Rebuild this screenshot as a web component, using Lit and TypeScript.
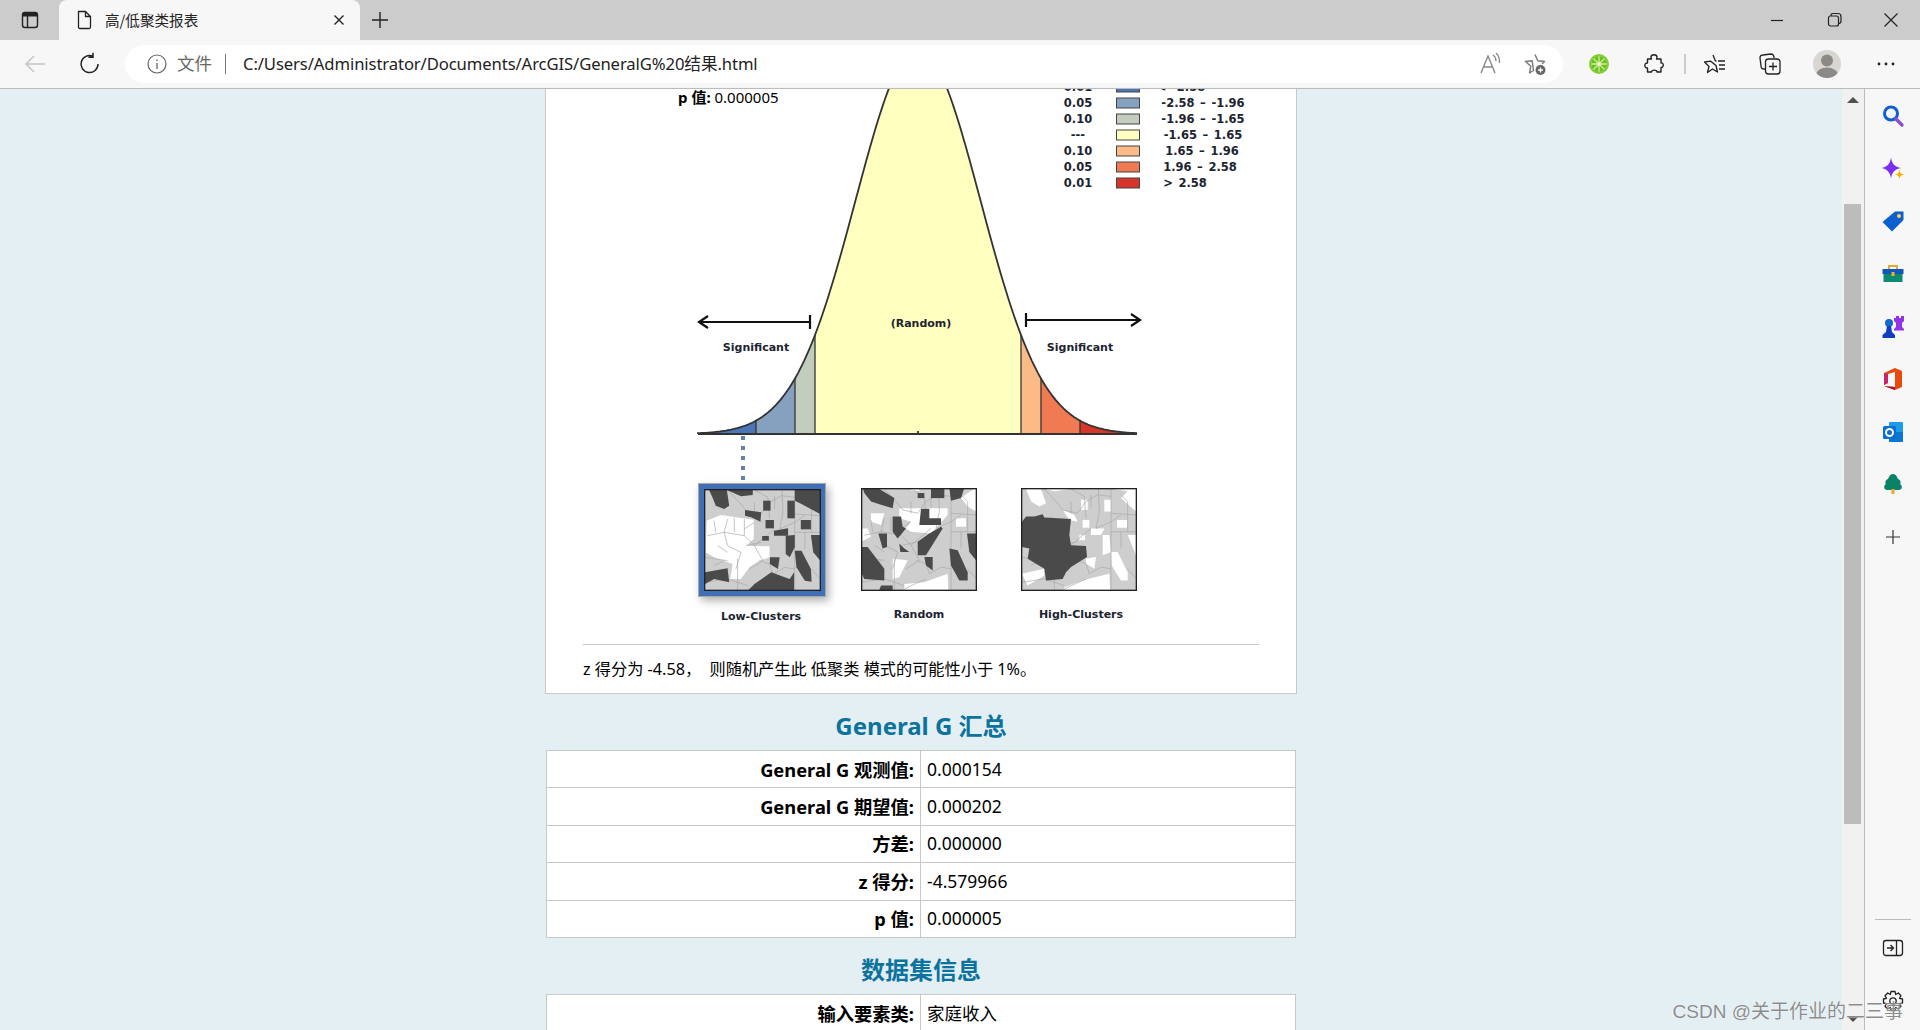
import { LitElement, html, css, svg } from "lit";
import { customElement } from "lit/decorators.js";

const bellH = (x: number) => 385 * Math.exp(-((x - 918) ** 2) / 7812);
const bellPts = (a: number, b: number) => {
  const p: string[] = [];
  for (let x = a; x <= b; x += 2) p.push(`${x},${(434 - bellH(x)).toFixed(1)}`);
  p.push(`${b},${(434 - bellH(b)).toFixed(1)}`);
  return p;
};
const band = (a: number, b: number) => `M${a},434 L${bellPts(a, b).join(" L")} L${b},434 Z`;
const curve = `M698,434 L${bellPts(698, 1137).join(" L")}`;

const bands: [number, number, string][] = [
  [698, 756, "#4a76b8"],
  [756, 795, "#86a0c0"],
  [795, 815, "#c3cdbd"],
  [815, 1021, "#ffffbf"],
  [1021, 1041, "#fcba86"],
  [1041, 1080, "#f07a52"],
  [1080, 1137, "#d7352a"],
];
const legend: [number, string, string, number, string][] = [
  [87, "0.01", "< -2.58", 1181, "#4a76b8"],
  [103, "0.05", "-2.58 – -1.96", 1203, "#86a0c0"],
  [119, "0.10", "-1.96 – -1.65", 1203, "#c3cdbd"],
  [135, "---", "-1.65 – 1.65", 1203, "#ffffbf"],
  [151, "0.10", "1.65 – 1.96", 1202, "#fcba86"],
  [167, "0.05", "1.96 – 2.58", 1200, "#f07a52"],
  [183, "0.01", "> 2.58", 1185, "#d7352a"],
];

const streets = svg`<path class="st" d="M70,3 L110,45 L125,65 L170,75 L195,40 L230,20 L270,25 M150,3 L190,25 L195,90 M232,3 L235,70 L225,120 M270,3 L270,303 M270,75 L345,80 M270,130 L345,130 M210,120 L150,170 L120,140 L60,130 L10,140 M70,90 L60,130 L70,170 L110,190 L95,240 M120,90 L120,140 M150,170 L175,215 L135,240 M0,205 L70,215 M100,210 L100,303 M3,280 L70,270 L130,290 M165,215 L195,225 L205,255 L240,235 L270,240 M300,20 L320,40 L320,130 M320,240 L345,270 M225,120 L270,100 L300,80 M30,95 L35,130 M90,85 L90,130 M150,100 L120,120 M40,170 L70,190 M170,160 L125,170 M300,130 L300,180 M210,20 L210,60 M150,40 L150,75 M195,270 L130,300 M30,230 L60,215"/>`;

const low = {
  white: ["8,95 50,78 148,92 148,150 125,170 195,172 195,205 165,215 135,235 110,270 78,270 85,225 30,205 5,190"],
  dark: ["15,3 68,3 75,50 60,60 35,50 25,25", "68,3 145,3 145,18 110,22", "176,35 198,35 198,65 176,65", "248,35 270,35 270,88 248,88", "270,3 345,3 345,75 290,45 270,35", "122,63 170,70 168,98 140,85 122,80", "183,93 208,93 208,118 183,118", "288,93 318,93 318,121 288,121", "208,125 250,118 250,140 208,140", "173,141 193,141 193,155 173,155", "243,140 270,138 270,175 255,205 243,195", "318,138 346,138 346,215 325,190", "270,185 290,185 318,240 320,278 300,275 275,235", "196,205 225,205 220,240 196,225", "133,303 150,285 200,250 240,265 255,270 268,250 268,303", "3,250 70,238 75,280 30,270 3,285"],
};
const random = {
  white: ["345,0 345,70 320,55 300,30 320,15", "115,60 260,60 260,80 210,135 150,130 135,120 150,100 115,90", "30,75 70,75 60,110 30,100", "0,120 20,120 30,145 0,160", "285,90 315,90 315,115 285,115", "95,210 140,215 115,265 95,270", "130,285 190,280 260,255 262,303 130,303", "150,0 175,0 175,8 150,8"],
  dark: ["5,0 50,0 100,30 95,60 60,50 30,40 10,15", "170,15 190,15 190,30 170,30", "210,0 250,0 250,30 210,30", "265,0 310,0 300,30 270,38", "95,85 120,85 125,115 135,120 110,150 95,130", "180,62 205,62 205,90 240,90 240,110 175,110", "52,135 78,135 78,175 65,180", "205,135 240,115 245,120 195,200 170,200 170,160", "318,135 345,135 345,215 325,190", "265,180 290,185 320,250 320,275 295,275 270,230", "0,175 20,175 70,240 70,275 10,270 0,250", "115,165 130,180 145,190 118,190", "190,205 215,205 215,245 195,230", "60,290 95,290 95,303 55,303"],
};
const high = {
  white: ["15,3 60,3 75,45 55,55 30,40", "70,3 150,3 100,10", "180,35 200,35 200,65 180,65", "250,35 270,35 270,70 250,70", "275,3 345,3 345,70 300,30 320,10", "125,65 160,80 170,100 145,95", "185,95 205,95 205,118 185,118", "288,95 318,95 318,118 288,118", "210,120 250,120 240,140 210,140", "175,140 192,140 192,155 175,155", "245,140 265,140 270,190 245,200", "320,140 345,140 345,200", "270,190 290,190 320,250 320,275 300,275 272,230", "195,210 225,205 220,240 195,225", "3,255 70,240 70,260 20,290", "130,295 170,280 200,270 265,255 268,303 130,303"],
  dark: ["15,85 40,85 65,78 70,88 150,92 145,140 150,170 195,172 198,205 150,235 135,250 125,270 75,275 70,240 20,210 25,180 3,175 3,100"],
};

const map = (x: number, y: number, w: number, h: number, d: { white: string[]; dark: string[] }) => svg`
  <svg x=${x} y=${y} width=${w} height=${h} viewBox="0 0 348 306" preserveAspectRatio="none">
    <g class="soft">
      <rect class="mapbg" width="348" height="306"/>
      ${d.white.map((p) => svg`<polygon class="mw" points=${p}/>`)}
      ${streets}
      ${d.dark.map((p) => svg`<polygon class="md" points=${p}/>`)}
    </g>
    <rect class="mapframe" x="2" y="2" width="344" height="302"/>
  </svg>`;

const diagram = svg`
  <svg class="diagram" viewBox="546 89 750 552" width="750" height="552">
    <text class="pval" x="678" y="103"><tspan class="b">p 值:</tspan> 0.000005</text>
    ${bands.map(([a, b, c]) => svg`<path d=${band(a, b)} fill=${c}/>`)}
    ${[756, 795, 815, 1021, 1041, 1080].map((x) => svg`<line class="div" x1=${x} x2=${x} y1="434" y2=${434 - bellH(x)}/>`)}
    <path class="bell" d=${curve}/>
    <line class="bell" x1="698" x2="1137" y1="434" y2="434"/>
    <line class="bell" x1="918" x2="918" y1="431" y2="434"/>
    <path class="arrow" d="M699,322 H810 M810,315 V329 M708,316 L699,322 L708,328"/>
    <path class="arrow" d="M1026,320 H1140 M1026,313 V327 M1131,314 L1140,320 L1131,326"/>
    <text class="lab" x="756" y="351" text-anchor="middle">Significant</text>
    <text class="lab" x="1080" y="351" text-anchor="middle">Significant</text>
    <text class="lab" x="921" y="327" text-anchor="middle">(Random)</text>
    <line class="dots" x1="743" x2="743" y1="436" y2="482"/>
    ${legend.map(([y, a, b, cx, c]) => svg`
      <text class="lab leg" x="1078" y=${y + 4} text-anchor="middle">${a}</text>
      <rect class="sw" x="1116.5" y=${y - 5} width="23" height="10" fill=${c}/>
      <text class="lab leg rng" x=${cx} y=${y + 4} text-anchor="middle">${b}</text>`)}
    <rect class="frame" x="698.5" y="483.5" width="127" height="113"/>
    ${map(704, 489, 117, 102, low)}
    ${map(861, 488, 116, 103, random)}
    ${map(1021, 488, 116, 103, high)}
    <text class="lab" x="761" y="620" text-anchor="middle">Low-Clusters</text>
    <text class="lab" x="919" y="618" text-anchor="middle">Random</text>
    <text class="lab" x="1081" y="618" text-anchor="middle">High-Clusters</text>
  </svg>`;

const i = (body: unknown, size = 24) => html`<svg class="ic" width=${size} height=${size} viewBox="0 0 24 24">${body}</svg>`;
const sideIcons = [
  svg`<circle cx="10" cy="9.5" r="6.5" fill="none" stroke="#0f5fd0" stroke-width="3"/><path d="M15,15 L21,21" stroke="#8a4fd8" stroke-width="3.4" stroke-linecap="round"/>`,
  svg`<path d="M10,0.5 C11,7 13.5,9.5 20,11 C13.5,12.5 11,15 10,21.5 C9,15 6.5,12.5 0.5,11 C6.5,9.5 9,7 10,0.5Z" fill="#7a2ff0"/><path d="M18.5,12.5 C19,16 20,17 23.5,17.5 C20,18 19,19 18.5,22.5 C18,19 17,18 13.5,17.5 C17,17 18,16 18.5,12.5Z" fill="#f4b400"/>`,
  svg`<path d="M14,2.5 H22.5 V11 L11,22.5 L1.5,13Z" fill="#0c5fd0"/><circle cx="18" cy="7" r="2" fill="#ffd24a"/>`,
  svg`<path d="M8,7 V4 H16 V7" fill="none" stroke="#e8a838" stroke-width="2"/><rect x="1.5" y="7" width="21" height="5" fill="#1258b8"/><rect x="2.5" y="12" width="19" height="8" fill="#0e8a72"/><rect x="10.5" y="10" width="3" height="4" fill="#f2b02e"/>`,
  svg`<path d="M13,1 V3 H15 V1 H18 V3 H20 V1 H23 V6 L21,8 V12 L23,14 V15.5 H13 V14 L15,12 V8 L13,6Z" fill="#9333e8"/><circle cx="8" cy="8" r="4" fill="#1668d0"/><path d="M6,11 H10 L11,17 L14,20 V23 H1.5 V20 L5,17Z" fill="#0f3fc0"/>`,
  svg`<path d="M3,6 L14,1 L21,4 V20 L14,23 L3,19 L14,20 V5 L7,7 V16 L3,18Z" fill="#e84a0c"/><path d="M3,6 L7,7 V16 L3,18Z" fill="#c8246a"/><path d="M3,19 L14,20 V23Z" fill="#b01030"/>`,
  svg`<rect x="8" y="2" width="14" height="20" rx="1" fill="#1c9be8"/><rect x="8" y="12" width="14" height="10" fill="#0a78d0"/><rect x="2" y="6" width="13" height="13" rx="1.5" fill="#0a6fd0"/><circle cx="8.5" cy="12.5" r="3.5" fill="none" stroke="#fff" stroke-width="2"/>`,
  svg`<path d="M12,2 C15,2 16,5 17,7 C20,8 20,11 19,12 C22,14 21,18 18,18 H6 C3,18 2,14 5,12 C4,11 4,8 7,7 C8,5 9,2 12,2Z" fill="#0b8268"/><rect x="10.5" y="17" width="3" height="5" fill="#f0a828"/>`,
  svg`<path d="M12,5 V19 M5,12 H19" stroke="#333" stroke-width="1.2"/>`,
];

@customElement("app-root")
export class AppRoot extends LitElement {
  static styles = css`
    :host { display: flex; flex-direction: column; width: 1920px; height: 1030px; overflow: hidden; position: relative; font-family: "Noto Sans", "Noto Sans CJK SC", sans-serif; color: #000; }
    .ic { display: block; flex: none; }
    .tabs { height: 40px; background: #ccc; display: flex; align-items: flex-end; flex: none; }
    .tb-toggle { width: 59px; height: 40px; display: flex; align-items: center; justify-content: center; }
    .tab { width: 301px; height: 40px; background: #f7f7f7; border-radius: 8px 8px 0 0; display: flex; align-items: center; box-sizing: border-box; padding: 0 9px 0 13px; }
    .tab-title { flex: 1; margin-left: 9px; padding-bottom: 2px; font: 14.6px "Noto Sans CJK SC", sans-serif; color: #222; }
    .newtab { width: 40px; height: 40px; display: flex; align-items: center; justify-content: center; }
    .spacer { flex: 1; }
    .wins { display: flex; align-items: center; height: 40px; padding-right: 17px; gap: 33px; }
    .toolbar { height: 48px; background: #f7f7f7; border-bottom: 1px solid #bbb; display: flex; align-items: center; flex: none; position: relative; }
    .nav { display: flex; width: 125px; flex: none; padding-left: 23px; gap: 31px; box-sizing: border-box; }
    .pill { width: 1438px; height: 38px; background: #fff; border-radius: 19px; display: flex; align-items: center; box-sizing: border-box; padding: 0 16px 0 20px; flex: none; }
    .file { margin-left: 8px; padding-bottom: 3px; font: 17.5px "Noto Sans CJK SC", sans-serif; color: #666; }
    .sep { width: 1px; height: 20px; background: #777; margin: 0 17px 0 13px; }
    .url { flex: 1; padding-bottom: 2px; font: 16.65px "Noto Sans", "Noto Sans CJK SC", sans-serif; color: #222; white-space: nowrap; letter-spacing: -0.1px; }
    .pill-r { display: flex; gap: 20px; }
    .tools { display: flex; align-items: center; flex: 1; padding-left: 24px; }
    .tools .gap45 { margin-left: 31px; }
    .vsep { width: 2px; height: 20px; background: #ccc; margin-left: 18px; margin-right: 17px; }
    .avatar { width: 28px; height: 28px; margin-left: 31px; }
    .more { margin-left: 33px; }
    .main { flex: 1; display: flex; min-height: 0; }
    .page { flex: 1; background: #e4eff4; display: flex; flex-direction: column; align-items: center; overflow: hidden; position: relative; }
    .wrap { width: 752px; display: flex; flex-direction: column; align-items: center; }
    .card { width: 752px; box-sizing: border-box; background: #fff; border: 1px solid #c8c8c8; border-top: none; height: 605px; }
    .diagram { display: block; }
    .pval { font: 15px "Noto Sans", "Noto Sans CJK SC", sans-serif; fill: #000; }
    .b { font-weight: 700; }
    .bell { fill: none; stroke: #333; stroke-width: 1.8; }
    .div { stroke: #333; stroke-width: 1.3; }
    .arrow { fill: none; stroke: #111; stroke-width: 2.2; }
    .lab { font: 700 11px "DejaVu Sans", sans-serif; fill: #1c2430; }
    .leg { font-size: 11.5px; }
    .rng { word-spacing: 1.6px; }
    .dots { stroke: #6480ae; stroke-width: 4; stroke-dasharray: 4 6; }
    .sw { stroke: #444; stroke-width: 1; }
    .frame { fill: #3f6fb5; stroke: #a8a8a8; stroke-width: 1; filter: drop-shadow(3px 4px 4px rgba(0, 0, 0, 0.3)); }
    .soft { filter: blur(0.35px); }
    .mapbg { fill: #cecece; }
    .mw { fill: #fff; }
    .md { fill: #4a4a4a; }
    .st { fill: none; stroke: #a8a8a8; stroke-width: 2; }
    .mapframe { fill: none; stroke: #222; stroke-width: 4; }
    .rule { height: 1px; background: #c8c8c8; margin: 3px 37px 0; }
    .note { margin: 0 37px; height: 49px; line-height: 49px; font-size: 16.2px; white-space: pre; }
    h2 { margin: 0; height: 56px; line-height: 64px; font-size: 24px; font-weight: 700; color: #0b739e; text-align: center; width: 100%; }
    table { width: 750px; border-collapse: collapse; background: #fff; table-layout: fixed; flex: none; }
    td { height: 37.4px; padding: 0 6px 1px; box-sizing: border-box; border: 1px solid #c8c8c8; font-size: 17.5px; white-space: nowrap; }
    td.k { width: 374px; text-align: right; font-weight: 700; font-size: 18.3px; }
    .scroll { width: 22px; flex: none; background: #f1f1f1; position: relative; }
    .thumb { position: absolute; left: 2px; width: 17px; top: 115px; height: 620px; background: #bcbcbc; }
    .up, .down { position: absolute; left: 5px; width: 0; height: 0; border-left: 6px solid transparent; border-right: 6px solid transparent; }
    .up { top: 8px; border-bottom: 6px solid #505050; }
    .down { bottom: 8px; border-top: 6px solid #505050; }
    .side { width: 56px; flex: none; background: #f7f7f7; border-left: 1px solid #bbb; display: flex; flex-direction: column; align-items: center; padding-top: 1px; box-sizing: border-box; }
    .si { height: 52.6px; display: flex; align-items: center; justify-content: center; flex: none; }
    .si:last-of-type { margin-top: 3px; }
    .side .low { margin-top: auto; display: flex; flex-direction: column; align-items: center; }
    .hrule { width: 36px; height: 1px; background: #bbb; margin-bottom: 16px; }
    .low .ic + .ic { margin-top: 29px; }
    .low { padding-bottom: 17px; }
    .mark { position: absolute; right: 17px; bottom: 7px; font: 19px "Liberation Sans", "Noto Sans CJK SC", sans-serif; color: rgba(120, 120, 120, 0.85); text-shadow: 0 0 1px #fff; white-space: nowrap; }
  `;

  row(k: string, v: string) {
    return html`<tr><td class="k">${k}</td><td>${v}</td></tr>`;
  }

  render() {
    return html`
      <div class="tabs">
        <div class="tb-toggle">${i(svg`<rect x="4.5" y="4.5" width="15" height="15" rx="2.5" fill="none" stroke="#222" stroke-width="1.4"/><path d="M4.5,7 Q4.5,4.5 7,4.5 H17 Q19.5,4.5 19.5,7 V8.5 H4.5Z" fill="#222"/><path d="M9.5,8 V19.5" stroke="#222" stroke-width="1.4"/>`)}</div>
        <div class="tab">
          ${i(svg`<path d="M6.5,3.5 H13.5 L18.5,8.5 V19 Q18.5,20.5 17,20.5 H8 Q6.5,20.5 6.5,19Z M13.5,3.5 V8.5 H18.5" fill="none" stroke="#222" stroke-width="1.3"/>`)}
          <span class="tab-title">高/低聚类报表</span>
          ${i(svg`<path d="M7.5,7.5 L16.5,16.5 M16.5,7.5 L7.5,16.5" stroke="#222" stroke-width="1.4"/>`)}
        </div>
        <div class="newtab">${i(svg`<path d="M12,4 V20 M4,12 H20" stroke="#222" stroke-width="1.4"/>`)}</div>
        <div class="spacer"></div>
        <div class="wins">
          ${i(svg`<path d="M6,12.5 H18" stroke="#222" stroke-width="1.2"/>`)}
          ${i(svg`<rect x="6.5" y="8" width="10" height="10" rx="2" fill="none" stroke="#222" stroke-width="1.2"/><path d="M9,8 V7.5 Q9,5.5 11,5.5 H16 Q19,5.5 19,8.5 V13 Q19,15.5 16.5,15.5" fill="none" stroke="#222" stroke-width="1.2"/>`)}
          ${i(svg`<path d="M5.5,5.5 L18.5,18.5 M18.5,5.5 L5.5,18.5" stroke="#222" stroke-width="1.2"/>`)}
        </div>
      </div>
      <div class="toolbar">
        <div class="nav">
          ${i(svg`<path d="M22,12 H3 M11,4 L3,12 L11,20" fill="none" stroke="#c4c4c4" stroke-width="1.5"/>`)}
          ${i(svg`<path d="M20,12 A8.5,8.5 0 1 1 15,4.3 M15,0.8 V5.3 H10.5" fill="none" stroke="#222" stroke-width="1.5"/>`)}
        </div>
        <div class="pill">
          ${i(svg`<circle cx="12" cy="12" r="9" fill="none" stroke="#666" stroke-width="1.2"/><path d="M12,11 V17 M12,7.5 V9" stroke="#666" stroke-width="1.3"/>`)}
          <span class="file">文件</span><span class="sep"></span>
          <span class="url">C:/Users/Administrator/Documents/ArcGIS/GeneralG%20结果.html</span>
          <div class="pill-r">
            ${i(svg`<path d="M2,21 L9,4 L16,21 M5,15 H13" fill="none" stroke="#888" stroke-width="1.4"/><path d="M14,3 Q17,5 17,9 M17,1 Q21,5 20.5,11" fill="none" stroke="#888" stroke-width="1.3"/>`)}
            ${i(svg`<path d="M12,2.5 L14.8,8.8 L21.5,9.5 L19,12 M10.5,18.5 L6.5,21 L7.8,14.3 L2.5,9.5 L9.2,8.8Z" fill="none" stroke="#777" stroke-width="1.4" stroke-linejoin="round"/><circle cx="17.5" cy="18" r="5" fill="#666"/><path d="M17.5,15.5 V20.5 M15,18 H20" stroke="#fff" stroke-width="1.3"/>`)}
          </div>
        </div>
        <div class="tools">
          ${i(svg`<circle cx="12" cy="12" r="10" fill="#84cf38"/><circle cx="12" cy="12" r="7.5" fill="#6fbb22"/><path d="M12,4.5 V19.5 M4.5,12 H19.5 M6.7,6.7 L17.3,17.3 M17.3,6.7 L6.7,17.3" stroke="#d4f0a8" stroke-width="1.3"/><circle cx="12" cy="12" r="1.8" fill="#e4f6c4"/>`)}
          <span class="gap45">${i(svg`<path d="M9,5 C9,2 15,2 15,5 C15,6 15,6.5 14.5,7 H19 V11 C22,10 22,16 19,15.5 V20 H15 C15,17.5 9.5,17.5 9.5,20 H5.5 V16 C2,16.5 2,10.5 5.5,11 V7 H9.5 C9,6.5 9,6 9,5Z" fill="none" stroke="#222" stroke-width="1.4" stroke-linejoin="round"/>`)}</span>
          <span class="vsep"></span>
          ${i(svg`<path d="M10,3 L12.3,8.8 L13.5,9 M13,13.5 L14.5,20 L9.5,17 L4.5,20.5 L6,14.5 L1.5,10 L7.7,9.2Z" fill="none" stroke="#222" stroke-width="1.3" stroke-linejoin="round"/><path d="M15,9 H22 M16,13 H22 M16,17 H22" stroke="#222" stroke-width="1.3"/>`)}
          <span class="gap45">${i(svg`<path d="M7,17 H6 Q3,17 3,14 L2,6 Q2,3 5,3 L13,2 Q15.5,2 16,5 V6" fill="none" stroke="#222" stroke-width="1.3"/><rect x="7.5" y="7" width="14.5" height="15" rx="3" fill="none" stroke="#222" stroke-width="1.3"/><path d="M15,10.5 V18.5 M11,14.5 H19" stroke="#222" stroke-width="1.3"/>`)}</span>
          <span class="avatar"><svg class="ic" width="28" height="28" viewBox="0 0 28 28"><defs><clipPath id="av"><circle cx="14" cy="14" r="14"/></clipPath></defs><circle cx="14" cy="14" r="14" fill="#d8d6d3"/><g clip-path="url(#av)"><circle cx="14" cy="10.5" r="6" fill="#8d8986"/><ellipse cx="14" cy="24" rx="10.5" ry="6.5" fill="#8d8986"/></g></svg></span>
          <span class="more">${i(svg`<circle cx="5" cy="12" r="1.4" fill="#222"/><circle cx="12" cy="12" r="1.4" fill="#222"/><circle cx="19" cy="12" r="1.4" fill="#222"/>`)}</span>
        </div>
      </div>
      <div class="main">
        <div class="page">
          <div class="wrap">
            <div class="card">
              ${diagram}
              <div class="rule"></div>
              <div class="note">z 得分为 -4.58，  则随机产生此 低聚类 模式的可能性小于 1%。</div>
            </div>
            <h2>General G 汇总</h2>
            <table>
              ${this.row("General G 观测值:", "0.000154")}
              ${this.row("General G 期望值:", "0.000202")}
              ${this.row("方差:", "0.000000")}
              ${this.row("z 得分:", "-4.579966")}
              ${this.row("p 值:", "0.000005")}
            </table>
            <h2>数据集信息</h2>
            <table>${this.row("输入要素类:", "家庭收入")}</table>
          </div>
        </div>
        <div class="scroll"><div class="up"></div><div class="thumb"></div><div class="down"></div></div>
        <div class="side">
          ${sideIcons.map((s) => html`<div class="si">${i(s)}</div>`)}
          <div class="low">
            <div class="hrule"></div>
            ${i(svg`<rect x="2.5" y="4.5" width="19" height="15" rx="2.5" fill="none" stroke="#222" stroke-width="1.3"/><path d="M15.5,4.5 V19.5 M6,12 H12.5 M9.5,9 L12.5,12 L9.5,15" fill="none" stroke="#222" stroke-width="1.3"/>`)}
            ${i(svg`<path d="M10,2.5 H14 L14.7,5.5 L17.3,4 L20,6.7 L18.5,9.3 L21.5,10 V14 L18.5,14.7 L20,17.3 L17.3,20 L14.7,18.5 L14,21.5 H10 L9.3,18.5 L6.7,20 L4,17.3 L5.5,14.7 L2.5,14 V10 L5.5,9.3 L4,6.7 L6.7,4 L9.3,5.5Z" fill="none" stroke="#222" stroke-width="1.3" stroke-linejoin="round"/><circle cx="12" cy="12" r="3.2" fill="none" stroke="#222" stroke-width="1.3"/>`)}
          </div>
        </div>
      </div>
      <div class="mark">CSDN @关于作业的二三事</div>
    `;
  }
}
